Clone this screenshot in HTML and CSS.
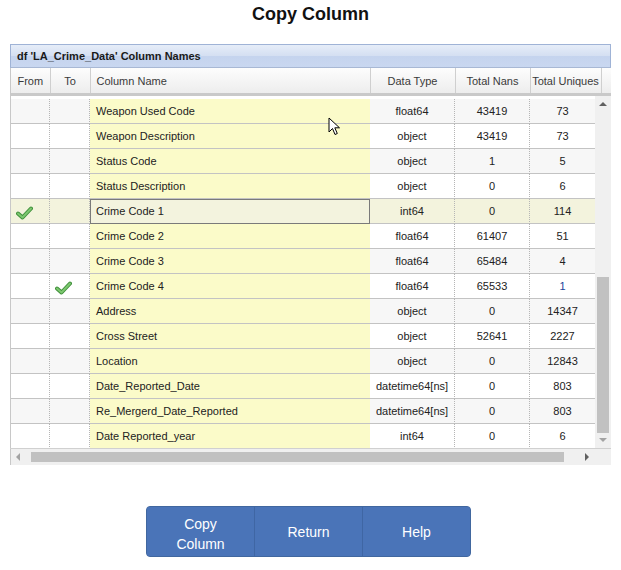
FILE: index.html
```html
<!DOCTYPE html>
<html>
<head>
<meta charset="utf-8">
<link rel="stylesheet" href="styles.css">
</head>
<body>
<h1 class="title">Copy Column</h1>
<div class="panel">
  <div class="caption">df 'LA_Crime_Data' Column Names</div>
  <div class="head">
    <table class="grid">
      <colgroup><col class="c1"><col class="c2"><col class="c3"><col class="c4"><col class="c5"><col class="c6"></colgroup>
      <tr><th>From</th><th>To</th><th class="left">Column Name</th><th>Data Type</th><th>Total Nans</th><th>Total Uniques</th></tr>
    </table>
    <div class="headfill"></div>
  </div>
  <div class="bodywrap">
    <div class="bodyarea">
      <table class="grid rows">
        <colgroup><col class="c1"><col class="c2"><col class="c3"><col class="c4"><col class="c5"><col class="c6"></colgroup>
        <tr class="alt"><td></td><td></td><td class="name">Weapon Used Code</td><td>float64</td><td>43419</td><td>73</td></tr>
        <tr><td></td><td></td><td class="name">Weapon Description</td><td>object</td><td>43419</td><td>73</td></tr>
        <tr class="alt"><td></td><td></td><td class="name">Status Code</td><td>object</td><td>1</td><td>5</td></tr>
        <tr><td></td><td></td><td class="name">Status Description</td><td>object</td><td>0</td><td>6</td></tr>
        <tr class="sel"><td class="chk"><svg width="17" height="14" viewBox="0 0 17 14"><path d="M2 7.5 L6.5 11.5 L15 2.5" fill="none" stroke="#3f8f3a" stroke-width="4" stroke-linecap="round" stroke-linejoin="round"/><path d="M2 7.5 L6.5 11.5 L15 2.5" fill="none" stroke="#7cc76f" stroke-width="2" stroke-linecap="round" stroke-linejoin="round"/></svg></td><td></td><td class="name">Crime Code 1</td><td>int64</td><td>0</td><td>114</td></tr>
        <tr><td></td><td></td><td class="name">Crime Code 2</td><td>float64</td><td>61407</td><td>51</td></tr>
        <tr class="alt"><td></td><td></td><td class="name">Crime Code 3</td><td>float64</td><td>65484</td><td>4</td></tr>
        <tr><td></td><td class="chk"><svg width="17" height="14" viewBox="0 0 17 14"><path d="M2 7.5 L6.5 11.5 L15 2.5" fill="none" stroke="#3f8f3a" stroke-width="4" stroke-linecap="round" stroke-linejoin="round"/><path d="M2 7.5 L6.5 11.5 L15 2.5" fill="none" stroke="#7cc76f" stroke-width="2" stroke-linecap="round" stroke-linejoin="round"/></svg></td><td class="name">Crime Code 4</td><td>float64</td><td>65533</td><td class="blue">1</td></tr>
        <tr class="alt"><td></td><td></td><td class="name">Address</td><td>object</td><td>0</td><td>14347</td></tr>
        <tr><td></td><td></td><td class="name">Cross Street</td><td>object</td><td>52641</td><td>2227</td></tr>
        <tr class="alt"><td></td><td></td><td class="name">Location</td><td>object</td><td>0</td><td>12843</td></tr>
        <tr><td></td><td></td><td class="name">Date_Reported_Date</td><td>datetime64[ns]</td><td>0</td><td>803</td></tr>
        <tr class="alt"><td></td><td></td><td class="name">Re_Mergerd_Date_Reported</td><td>datetime64[ns]</td><td>0</td><td>803</td></tr>
        <tr><td></td><td></td><td class="name">Date Reported_year</td><td>int64</td><td>0</td><td>6</td></tr>
      </table>
      <svg class="cursor" width="13" height="20" viewBox="0 0 13 20"><path d="M1 1 L1 15 L4.5 11.5 L7 17.5 L9.3 16.5 L6.8 10.8 L11.5 10.8 Z" fill="#fff" stroke="#000" stroke-width="1" stroke-linejoin="round"/></svg>
    </div>
    <div class="vscroll">
      <span class="arr up"></span>
      <div class="vtrack"><div class="vthumb"></div></div>
      <span class="arr down"></span>
    </div>
  </div>
  <div class="hbar">
    <div class="hscroll">
      <span class="arr left"></span>
      <div class="htrack"><div class="hthumb"></div></div>
      <span class="arr right"></span>
    </div>
    <div class="corner"></div>
  </div>
</div>
<div class="buttons">
  <button class="btn two">Copy<br>Column</button>
  <button class="btn">Return</button>
  <button class="btn">Help</button>
</div>
</body>
</html>
```
FILE: styles.css
```css
* { box-sizing: border-box; }
body {
  margin: 0;
  font-family: "Liberation Sans", Arial, sans-serif;
  color: #222;
  background: #fff;
}
.title {
  margin: 0;
  padding-top: 4px;
  height: 44px;
  line-height: 20px;
  font-size: 18px;
  font-weight: bold;
  text-align: center;
  color: #111;
}
.panel {
  margin-left: 10px;
  width: 601px;
}
.caption {
  height: 24px;
  line-height: 23px;
  padding-left: 6px;
  font-size: 11px;
  font-weight: bold;
  color: #1a1a1a;
  background: linear-gradient(#e6edf8, #d4dff2 50%, #c5d4ee 52%, #c9d7f0);
  border: 1px solid #9fb3d6;
  border-bottom-color: #a8b8d4;
}
.head {
  display: flex;
  height: 28px;
  border-left: 1px solid #c8c8c8;
  border-bottom: 3px solid #c9c9c9;
  background: linear-gradient(#fdfdfd, #ededed);
}
.headfill { flex: 1; }
.grid {
  border-collapse: collapse;
  table-layout: fixed;
  width: 585px;
  font-size: 11px;
}
.c1 { width: 39px; }
.c2 { width: 40px; }
.c3 { width: 280px; }
.c4 { width: 85px; }
.c5 { width: 75px; }
.c6 { width: 66px; }
.head .grid { width: 590px; }
.head .c6 { width: 71px; }
th {
  height: 25px;
  font-weight: normal;
  color: #3a3a3a;
  text-align: center;
  border-right: 1px solid #cfcfcf;
  padding: 0;
  white-space: nowrap;
}
th.left { text-align: left; padding-left: 6px; }
.bodywrap {
  display: flex;
  height: 352px;
  border-left: 1px solid #c8c8c8;
}
.bodyarea {
  position: relative;
  width: 585px;
  padding-top: 3px;
  overflow: hidden;
}
.grid.rows {
  border-collapse: separate;
  border-spacing: 0;
}
.rows td {
  height: 25px;
  padding: 0;
  text-align: center;
  border-bottom: 1px solid #c3c3c3;
  border-right: 1px dotted #b5b5b5;
  color: #222;
  white-space: nowrap;
}
.rows tr { background: #fff; }
.rows tr.alt { background: #f7f7f7; }
.rows td.name {
  text-align: left;
  padding-left: 6px;
  background: #fbfbc9;
  border-right: none;
}
.rows tr.sel { background: #f3f3dd; }
.rows tr.sel td.name {
  background: #f3f3de;
  outline: 1px solid #7a7a7a;
  outline-offset: -1px;
}
.rows td.chk { text-align: left; padding-left: 5px; padding-top: 3px; }
.rows td.chk svg { display: block; }
.rows td.blue { color: #21459a; }
.cursor {
  position: absolute;
  left: 317px;
  top: 21px;
}
.vscroll {
  width: 16px;
  background: #f0f0f0;
  display: flex;
  flex-direction: column;
  align-items: center;
}
.vtrack { flex: 1; width: 100%; position: relative; }
.vthumb {
  position: absolute;
  left: 2px;
  right: 2px;
  top: 166px;
  height: 156px;
  background: #c1c1c1;
}
.arr { width: 0; height: 0; display: block; }
.arr.up {
  margin: 6px 0 5px;
  border-left: 4px solid transparent;
  border-right: 4px solid transparent;
  border-bottom: 4px solid #606060;
}
.arr.down {
  margin: 5px 0 6px;
  border-left: 4px solid transparent;
  border-right: 4px solid transparent;
  border-top: 4px solid #a3a3a3;
}
.hbar {
  display: flex;
  height: 17px;
  border-top: 1px solid #d0d0d0;
}
.hscroll {
  width: 585px;
  background: #f0f0f0;
  display: flex;
  align-items: center;
  border-left: 1px solid #c8c8c8;
}
.htrack { flex: 1; position: relative; height: 100%; }
.hthumb {
  position: absolute;
  left: 6px;
  width: 533px;
  top: 3px;
  bottom: 3px;
  background: #c1c1c1;
}
.arr.left {
  margin: 0 5px 0 5px;
  border-top: 4px solid transparent;
  border-bottom: 4px solid transparent;
  border-right: 4px solid #a3a3a3;
}
.arr.right {
  margin: 0 6px 0 5px;
  border-top: 4px solid transparent;
  border-bottom: 4px solid transparent;
  border-left: 4px solid #606060;
}
.corner { flex: 1; background: #f0f0f0; }
.buttons {
  display: flex;
  width: 325px;
  margin: 41px 0 0 146px;
  height: 51px;
  border-radius: 4px;
  overflow: hidden;
  background: #4a74b8;
  border: 1px solid #41679f;
}
.btn {
  flex: 1;
  border: none;
  border-right: 1px solid #3f66a4;
  background: #4a74b8;
  color: #fff;
  font-family: "Liberation Sans", Arial, sans-serif;
  font-size: 14px;
  line-height: 20px;
  padding: 0;
}
.btn.two { padding-top: 5px; }
.btn:last-child { border-right: none; }
```
